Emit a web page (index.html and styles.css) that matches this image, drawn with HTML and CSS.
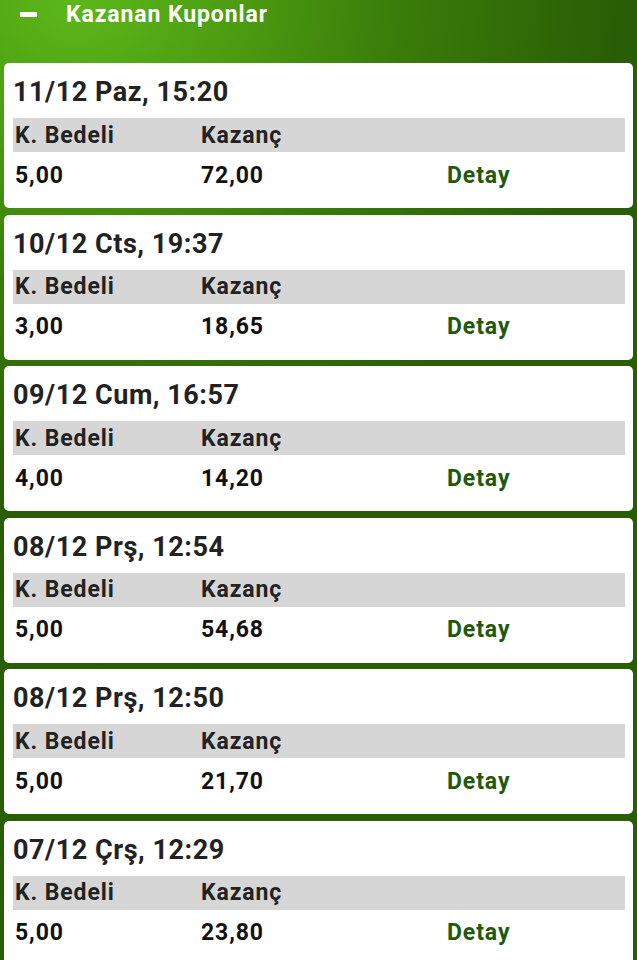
FILE: index.html
```html
<!DOCTYPE html>
<html lang="tr">
<head>
    <meta charset="UTF-8">
    <meta name="viewport" content="width=device-width, initial-scale=1.0">
    <title>Kazanan Kuponlar</title>
    <link rel="stylesheet" href="styles.css">
</head>
<body>

    <div class="header">
        <span class="collapse"></span>
        <h1>Kazanan Kuponlar</h1>
    </div>

    <div class="list">
        <div class="coupon">
            <div class="date">11/12 Paz, 15:20</div>
            <div class="row head"><span>K. Bedeli</span><span>Kazanç</span><span></span></div>
            <div class="row"><span>5,00</span><span>72,00</span><a href="#">Detay</a></div>
        </div>
        <div class="coupon">
            <div class="date">10/12 Cts, 19:37</div>
            <div class="row head"><span>K. Bedeli</span><span>Kazanç</span><span></span></div>
            <div class="row"><span>3,00</span><span>18,65</span><a href="#">Detay</a></div>
        </div>
        <div class="coupon">
            <div class="date">09/12 Cum, 16:57</div>
            <div class="row head"><span>K. Bedeli</span><span>Kazanç</span><span></span></div>
            <div class="row"><span>4,00</span><span>14,20</span><a href="#">Detay</a></div>
        </div>
        <div class="coupon">
            <div class="date">08/12 Prş, 12:54</div>
            <div class="row head"><span>K. Bedeli</span><span>Kazanç</span><span></span></div>
            <div class="row"><span>5,00</span><span>54,68</span><a href="#">Detay</a></div>
        </div>
        <div class="coupon">
            <div class="date">08/12 Prş, 12:50</div>
            <div class="row head"><span>K. Bedeli</span><span>Kazanç</span><span></span></div>
            <div class="row"><span>5,00</span><span>21,70</span><a href="#">Detay</a></div>
        </div>
        <div class="coupon">
            <div class="date">07/12 Çrş, 12:29</div>
            <div class="row head"><span>K. Bedeli</span><span>Kazanç</span><span></span></div>
            <div class="row"><span>5,00</span><span>23,80</span><a href="#">Detay</a></div>
        </div>
    </div>

</body>
</html>
```

FILE: styles.css
```css
html {
    background-color: #2f6a06;
}
body {
    font-family: Roboto, "Liberation Sans", Arial, sans-serif;
    margin: 0;
    padding: 0 4px;
    min-height: 960px;
    background: radial-gradient(ellipse 85% 50% at 12% 0%, #5cb81a 0%, #4c9c11 30%, #3a7c0a 60%, #2a5e06 100%);
    overflow: hidden;
}
.header {
    display: flex;
    align-items: center;
    height: 28px;
    padding-left: 16px;
}
.collapse {
    width: 17px;
    height: 5px;
    background-color: #fff;
    margin-top: 1px;
}
.header h1 {
    margin: 0 0 0 29px;
    color: #fff;
    font-size: 23px;
    font-weight: 700;
    letter-spacing: 0.9px;
}
.list {
    display: flex;
    flex-direction: column;
    gap: 6.6px;
    margin-top: 35px;
}
.coupon {
    height: 145px;
    box-sizing: border-box;
    padding: 10px 8px 10px 9px;
    background-color: #fff;
    border-radius: 5px;
}
.date {
    height: 38px;
    line-height: 38px;
    font-size: 27px;
    font-weight: 700;
    letter-spacing: 0.55px;
    color: #222;
}
.row {
    display: grid;
    grid-template-columns: 186px 246px 1fr;
    align-items: center;
    height: 46px;
    padding-left: 2px;
    font-size: 23px;
    font-weight: 700;
    letter-spacing: 0.9px;
    color: #111;
}
.row.head {
    height: 34px;
    margin-top: 7px;
    background-color: #d6d6d6;
    color: #222;
}
.row a {
    color: #1f5a0a;
    text-decoration: none;
}
```
